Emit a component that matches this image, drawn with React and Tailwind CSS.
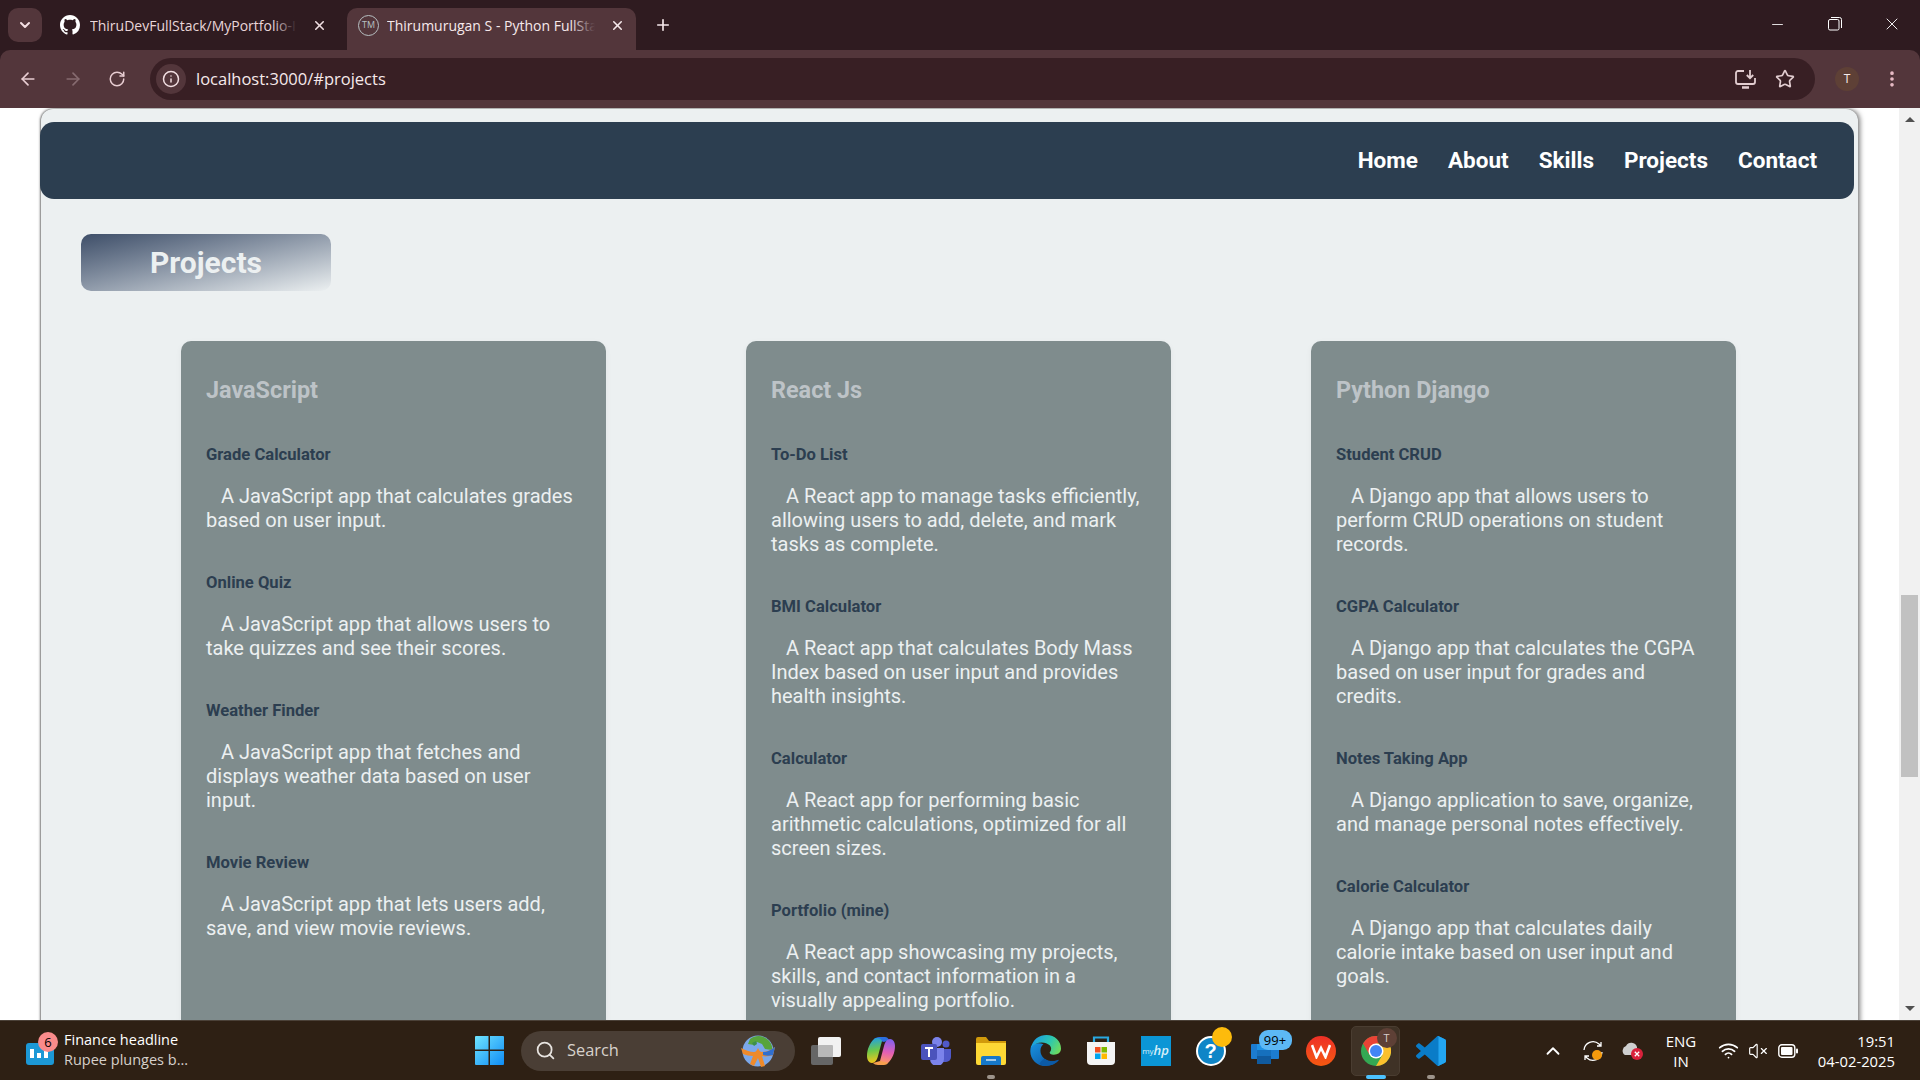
import React from "react";
import {
  ArrowLeft,
  ArrowRight,
  RotateCw,
  Info,
  Star,
  ChevronDown,
  ChevronUp,
  X,
  Plus,
  Minus,
  EllipsisVertical,
  Search,
  Wifi,
  VolumeX,
} from "lucide-react";

const columns = [
  {
    title: "JavaScript",
    projects: [
      { name: "Grade Calculator", text: "A JavaScript app that calculates grades based on user input." },
      { name: "Online Quiz", text: "A JavaScript app that allows users to take quizzes and see their scores." },
      { name: "Weather Finder", text: "A JavaScript app that fetches and displays weather data based on user input." },
      { name: "Movie Review", text: "A JavaScript app that lets users add, save, and view movie reviews." },
    ],
  },
  {
    title: "React Js",
    projects: [
      { name: "To-Do List", text: "A React app to manage tasks efficiently, allowing users to add, delete, and mark tasks as complete." },
      { name: "BMI Calculator", text: "A React app that calculates Body Mass Index based on user input and provides health insights." },
      { name: "Calculator", text: "A React app for performing basic arithmetic calculations, optimized for all screen sizes." },
      { name: "Portfolio (mine)", text: "A React app showcasing my projects, skills, and contact information in a visually appealing portfolio." },
    ],
  },
  {
    title: "Python Django",
    projects: [
      { name: "Student CRUD", text: "A Django app that allows users to perform CRUD operations on student records." },
      { name: "CGPA Calculator", text: "A Django app that calculates the CGPA based on user input for grades and credits." },
      { name: "Notes Taking App", text: "A Django application to save, organize, and manage personal notes effectively." },
      { name: "Calorie Calculator", text: "A Django app that calculates daily calorie intake based on user input and goals." },
    ],
  },
];

const navLinks = ["Home", "About", "Skills", "Projects", "Contact"];

const GithubMark = () => (
  <svg width="20" height="20" viewBox="0 0 16 16" fill="#ffffff">
    <path d="M8 0C3.58 0 0 3.58 0 8c0 3.54 2.29 6.53 5.47 7.59.4.07.55-.17.55-.38 0-.19-.01-.82-.01-1.49-2.01.37-2.53-.49-2.69-.94-.09-.23-.48-.94-.82-1.13-.28-.15-.68-.52-.01-.53.63-.01 1.08.58 1.23.82.72 1.21 1.87.87 2.33.66.07-.52.28-.87.51-1.07-1.78-.2-3.64-.89-3.64-3.95 0-.87.31-1.59.82-2.15-.08-.2-.36-1.02.08-2.12 0 0 .67-.21 2.2.82.64-.18 1.32-.27 2-.27s1.36.09 2 .27c1.53-1.04 2.2-.82 2.2-.82.44 1.1.16 1.92.08 2.12.51.56.82 1.27.82 2.15 0 3.07-1.87 3.75-3.65 3.95.29.25.54.73.54 1.48 0 1.07-.01 1.93-.01 2.2 0 .21.15.46.55.38A8 8 0 0 0 16 8c0-4.42-3.58-8-8-8z" />
  </svg>
);

const TabStrip = () => (
  <div className="h-[50px] shrink-0 bg-[#2f1b20] flex items-end text-[14px] font-['Open_Sans',sans-serif]">
    <div className="w-[34px] h-[34px] ml-2 mb-2 rounded-[10px] bg-[#53363b] flex items-center justify-center">
      <ChevronDown size={16} strokeWidth={3} color="#f4dfe2" />
    </div>
    <div className="w-[305px] h-[42px] flex items-center pl-[18px] pb-[8px] text-[#e9d6d9]">
      <GithubMark />
      <div className="relative ml-[10px] w-[207px] overflow-hidden whitespace-nowrap">
        ThiruDevFullStack/MyPortfolio-I
        <span className="absolute right-0 top-0 w-[24px] h-full bg-linear-to-r from-transparent to-[#2f1b20]" />
      </div>
      <X size={15} strokeWidth={2.5} color="#f0dfe2" className="ml-[15px]" />
    </div>
    <div className="w-[289px] h-[42px] rounded-t-[10px] bg-[#53363b] flex items-center pl-[11px] pb-[8px] text-[#f6e9eb]">
      <span className="w-[21px] h-[21px] rounded-full border border-[#b7c0c2] text-[9px] flex items-center justify-center text-[#b7c0c2]">TM</span>
      <div className="relative ml-[8px] w-[208px] overflow-hidden whitespace-nowrap">
        Thirumurugan S - Python FullSta
        <span className="absolute right-0 top-0 w-[24px] h-full bg-linear-to-r from-transparent to-[#53363b]" />
      </div>
      <X size={15} strokeWidth={2.5} color="#f6e9eb" className="ml-[15px]" />
    </div>
    <Plus size={18} strokeWidth={2.2} color="#f6e9eb" className="ml-[18px] mb-[16px]" />
    <div className="ml-auto h-[50px] flex items-center pb-[2px]">
      <div className="w-[57px] flex justify-center"><Minus size={17} strokeWidth={1.2} color="#ffffff" /></div>
      <div className="w-[57px] flex justify-center">
        <svg width="14" height="14" viewBox="0 0 14 14" fill="none" stroke="#ffffff" strokeWidth="1">
          <rect x="0.5" y="2.5" width="10.5" height="10.5" rx="1.5" />
          <path d="M3 .5h8.5a2 2 0 0 1 2 2V11" />
        </svg>
      </div>
      <div className="w-[57px] flex justify-center"><X size={20} strokeWidth={1.1} color="#ffffff" /></div>
    </div>
  </div>
);

const Toolbar = () => (
  <div className="h-[58px] shrink-0 bg-[#2f1b20]">
    <div className="h-[58px] bg-[#53363b] rounded-t-[10px] flex items-center">
      <div className="w-[150px] flex items-center pl-[18px] gap-[25px]">
        <ArrowLeft size={20} strokeWidth={2} color="#e8cdd2" />
        <ArrowRight size={20} strokeWidth={2} color="#866b70" />
        <RotateCw size={18} strokeWidth={2} color="#e8cdd2" />
      </div>
      <div className="w-[1665px] h-[42px] rounded-full bg-[#381f24] flex items-center pl-[6px]">
        <div className="w-[30px] h-[30px] rounded-full bg-[#53363b] flex items-center justify-center">
          <Info size={18} strokeWidth={2} color="#f2dfe2" />
        </div>
        <span className="ml-[10px] text-[16.5px] text-[#f6e9eb] font-['Open_Sans',sans-serif]">localhost:3000/#projects</span>
        <div className="ml-auto pr-[20px] flex items-center gap-[19px]">
          <svg width="21" height="20" viewBox="0 0 21 20" fill="none" stroke="#e2cdd0" strokeWidth="1.8">
            <path d="M9 2H3a2 2 0 0 0-2 2v9a2 2 0 0 0 2 2h15a2 2 0 0 0 2-2V9" />
            <path d="M7 18.5h7" strokeWidth="2.5" />
            <path d="M15 1v8M11.8 6l3.200 3.200L18.200 6" />
          </svg>
          <Star size={20} strokeWidth={2} color="#e2cdd0" />
        </div>
      </div>
      <div className="w-[24px] h-[24px] ml-[20px] rounded-full bg-[#5e4036] text-[#f5eaea] text-[12px] flex items-center justify-center font-['Open_Sans',sans-serif]">T</div>
      <EllipsisVertical size={20} strokeWidth={2.4} color="#e9bcc6" className="ml-[23px]" />
    </div>
  </div>
);

const ProjectColumn = ({ column }) => (
  <div className="w-[425px] shrink-0 rounded-[10px] bg-[#7f8c8d] px-[25px] pt-[35px] pb-[40px] shadow-[0_2px_6px_rgba(0,0,0,0.05)]">
    <h3 className="text-[23.4px] leading-[28px] font-bold text-[#bdc3c7]">{column.title}</h3>
    {column.projects.map((project) => (
      <div key={project.name} className="mt-[41px]">
        <h4 className="text-[16.6px] leading-[19px] font-bold text-[#2c3e50]">{project.name}</h4>
        <p className="mt-[20px] text-[20px] leading-[24px] indent-[15px] text-[#ecf0f1]">{project.text}</p>
      </div>
    ))}
  </div>
);

const Portfolio = () => (
  <div className="flex-1 min-h-0 flex bg-white overflow-hidden">
    <div className="w-[1899px] pl-[41px] overflow-hidden">
      <div className="w-[1817px] min-h-[1200px] bg-[#ecf0f1] rounded-t-[12px] mt-px pt-[13px] shadow-[2px_0_5px_rgba(0,0,0,0.5),-1px_0_2px_rgba(0,0,0,0.45)] font-['Roboto',sans-serif]">
        <nav className="h-[77px] -ml-px w-[1814px] rounded-[14px] bg-[#2c3e50] flex items-center justify-end gap-[30px] pr-[37px]">
          {navLinks.map((link) => (
            <a key={link} className="text-[22.5px] font-bold text-white">{link}</a>
          ))}
        </nav>
        <div className="ml-[40px] mt-[35px] w-[250px] h-[57px] rounded-[10px] bg-linear-to-br from-[#3f4f69] to-[#ecf0f1] flex items-center justify-center">
          <h2 className="text-[30px] font-bold text-[#ecf0f1]">Projects</h2>
        </div>
        <div className="mt-[50px] pl-[140px] flex gap-[140px]">
          {columns.map((column) => (
            <ProjectColumn key={column.title} column={column} />
          ))}
        </div>
      </div>
    </div>
    <div className="w-[21px] shrink-0 bg-[#f1f1f1] flex flex-col items-center">
      <div className="mt-[9px] w-0 h-0 border-x-[5px] border-x-transparent border-b-[5px] border-b-[#505050]" />
      <div className="mt-[473px] w-[17px] h-[182px] bg-[#c1c1c1]" />
      <div className="mt-auto mb-[9px] w-0 h-0 border-x-[5px] border-x-transparent border-t-[5px] border-t-[#505050]" />
    </div>
  </div>
);

const Slot = ({ children, active, dot }) => (
  <div className="w-[55px] h-[60px] flex items-center justify-center relative">
    {active && <div className="absolute w-[49px] h-[50px] rounded-[5px] bg-[#3f3226] border border-[#4a3d31]" />}
    <div className="relative flex">{children}</div>
    {dot && (
      <div className={active ? "absolute bottom-[2px] w-[20px] h-[4px] rounded-full bg-[#4cc2ff]" : "absolute bottom-[2px] w-[8px] h-[4px] rounded-full bg-[#9d948b]"} />
    )}
  </div>
);

const WindowsLogo = () => (
  <svg width="29" height="29" viewBox="0 0 29 29">
    <defs>
      <linearGradient id="winlogo" x1="0" y1="0" x2="1" y2="1">
        <stop offset="0" stopColor="#6fe4ff" />
        <stop offset="1" stopColor="#0f8cf5" />
      </linearGradient>
    </defs>
    <path fill="url(#winlogo)" d="M1 0h12.500v13.500H0V1a1 1 0 0 1 1-1zM15 0h13a1 1 0 0 1 1 1v12.500H15zM0 15h13.500v14H1a1 1 0 0 1-1-1zM15 15h14v13a1 1 0 0 1-1 1H15z" />
  </svg>
);

const GlobeBadge = () => (
  <svg width="34" height="34" viewBox="0 0 34 34">
    <circle cx="17" cy="17" r="15.500" fill="#7ba8ea" />
    <path fill="#57a43c" d="M9 5c5-4 12-4 17 0 4 3 6 8 5 11l-7-1-3-5-5-2-3 3-6-1z" />
    <path fill="#3d8f4a" d="M11 9l4-2 1 3-3 2z" />
    <path fill="#ee8a2b" d="M0 14c4 2 9 4 13 4 2 0 3-2 4-4 1 2 2 4 4 4 4 0 9-2 13-5l-2 8c-3 1-7 2-11 1l3 10-4 1-3-9-4 8-4-2 3-8c-4 0-7-1-10-2z" />
    <path fill="#2f6fd0" d="M22 18c4 0 8-2 12-5l-2 8c-3 1-7 1-10 0z" />
  </svg>
);

const TaskView = () => (
  <svg width="30" height="28" viewBox="0 0 30 28">
    <rect x="0" y="8" width="22" height="20" rx="2" fill="#666666" />
    <rect x="7" y="0" width="23" height="20" rx="2" fill="#f2f2f2" />
    <rect x="7" y="8" width="15" height="12" rx="1" fill="#b8b8b8" />
  </svg>
);

const Copilot = () => (
  <svg width="28" height="28" viewBox="0 0 28 28">
    <defs>
      <linearGradient id="copA" x1="0.3" y1="0" x2="0.4" y2="1">
        <stop offset="0" stopColor="#1f9fe8" />
        <stop offset="0.5" stopColor="#6cc84a" />
        <stop offset="1" stopColor="#f7c71a" />
      </linearGradient>
      <linearGradient id="copB" x1="0.6" y1="0" x2="0.5" y2="1">
        <stop offset="0" stopColor="#7e60f0" />
        <stop offset="0.55" stopColor="#e45fb4" />
        <stop offset="1" stopColor="#ff9a60" />
      </linearGradient>
    </defs>
    <path fill="#2b6fe0" d="M7 2C8 1 10 0 12 0h6c2 0 3 1 4 3l-5 2z" />
    <path fill="url(#copA)" d="M7 2c3-2 7-1 8 2l-4 15c-1 4-3 7-6 7-3 0-5-3-5-7 0-7 3-13 7-17z" />
    <path fill="url(#copB)" d="M21 26c-3 2-7 1-8-2l4-15c1-4 3-7 6-7 3 0 5 3 5 7 0 7-3 13-7 17z" />
    <path fill="#f7a04e" d="M6 26c1 1 3 2 5 2h6c2 0 3-1 4-2l-8-2z" />
  </svg>
);

const Teams = () => (
  <svg width="30" height="28" viewBox="0 0 30 28">
    <circle cx="16" cy="5" r="5" fill="#7b83eb" />
    <circle cx="25" cy="7" r="3.500" fill="#5059c9" />
    <path fill="#5059c9" d="M20 12h10v8a5 5 0 0 1-5 5h-5z" />
    <path fill="#7b83eb" d="M9 11h14v11a6 6 0 0 1-14 0z" />
    <rect x="0" y="7" width="16" height="16" rx="2" fill="#4b53bc" />
    <path fill="#ffffff" d="M4 10h8v2H9v8H7v-8H4z" />
  </svg>
);

const Explorer = () => (
  <svg width="30" height="28" viewBox="0 0 30 28">
    <path fill="#d19a0b" d="M0 2a2 2 0 0 1 2-2h8l3 4h17v6H0z" />
    <path fill="#fdd835" d="M0 6h30v20a2 2 0 0 1-2 2H2a2 2 0 0 1-2-2z" />
    <path fill="#1678c9" d="M5 21a2 2 0 0 1 2-2h16a2 2 0 0 1 2 2v7H5z" />
    <rect x="10" y="22" width="10" height="2" fill="#ffffff" opacity="0.6" />
  </svg>
);

const Edge = () => (
  <svg width="31" height="31" viewBox="0 0 30 30">
    <defs>
      <linearGradient id="edgeA" x1="0" y1="0.3" x2="1" y2="0.7">
        <stop offset="0" stopColor="#1a9be6" />
        <stop offset="0.55" stopColor="#2cc6b0" />
        <stop offset="1" stopColor="#6fdc5c" />
      </linearGradient>
      <linearGradient id="edgeB" x1="0" y1="0" x2="1" y2="1">
        <stop offset="0" stopColor="#1893e0" />
        <stop offset="1" stopColor="#0b4f9e" />
      </linearGradient>
    </defs>
    <path fill="url(#edgeB)" d="M1 11C-2 21 5 30 15 30c5 0 10-2 13-6-4 2-10 2-14-1-5-4-5-11-1-14-4-2-10-1-12 2z" />
    <path fill="url(#edgeA)" d="M1 12C3 4 9 0 16 0c8 0 14 6 14 13 0 4-3 6-7 6-3 0-4-1-4-2 2-2 2-5 0-7C15 6 6 6 1 12z" />
    <path fill="#0c5aa6" d="M14 23c4 3 10 3 14 1-3 4-8 6-13 6-2 0-4-1-6-2 1-2 3-4 5-5z" />
  </svg>
);

const Store = () => (
  <svg width="30" height="29" viewBox="0 0 30 29">
    <path d="M8 7V1.500h14V7" fill="none" stroke="#29a8e0" strokeWidth="2.200" />
    <path fill="#f4f4f4" d="M1 6h28v19a4 4 0 0 1-4 4H5a4 4 0 0 1-4-4z" />
    <rect x="9" y="11" width="5.500" height="5.500" fill="#f25022" />
    <rect x="15.500" y="11" width="5.500" height="5.500" fill="#7fba00" />
    <rect x="9" y="17.500" width="5.500" height="5.500" fill="#00a4ef" />
    <rect x="15.500" y="17.500" width="5.500" height="5.500" fill="#ffb900" />
  </svg>
);

const MyHp = () => (
  <div className="w-[30px] h-[30px] bg-[#0b96d6] flex items-center justify-center text-[#d7eef8] font-['Open_Sans',sans-serif]">
    <span className="text-[8px]">my</span>
    <span className="text-[13px] italic font-semibold leading-none">hp</span>
  </div>
);

const HelpBadge = () => (
  <div className="w-[30px] h-[30px] rounded-full border-[2px] border-white bg-[#0f85c7] flex items-center justify-center text-white font-bold text-[20px] relative font-['Liberation_Sans',sans-serif]">
    ?
    <span className="absolute -top-[11px] left-[14px] w-[20px] h-[20px] rounded-full bg-[#fdbb0c]" />
  </div>
);

const Outlook = () => (
  <div className="relative w-[30px] h-[30px]">
    <svg width="30" height="30" viewBox="0 0 30 30">
      <rect x="0" y="8" width="28" height="15" rx="1" fill="#1c7cd0" />
      <rect x="6" y="8" width="14" height="6" fill="#1f93e6" />
      <rect x="6" y="14" width="14" height="6" fill="#1670bd" />
      <rect x="6" y="20" width="14" height="8" fill="#105a9e" />
    </svg>
    <span className="absolute -top-[6px] left-[8px] w-[33px] h-[20px] rounded-[9px] bg-[#5cb8f5] text-[13px] leading-[20px] text-center text-black font-['Open_Sans',sans-serif]">99+</span>
  </div>
);

const Wps = () => (
  <div className="w-[30px] h-[30px] rounded-full bg-linear-to-b from-[#ee2f26] to-[#f5580f] flex items-center justify-center">
    <svg width="20" height="16" viewBox="0 0 20 16" fill="none" stroke="#ffffff" strokeWidth="2.600">
      <path d="M1 2l4.500 12L10 5l4.500 9L19 2" />
    </svg>
  </div>
);

const Chrome = () => (
  <div className="relative w-[30px] h-[30px]">
    <svg width="30" height="30" viewBox="0 0 30 30">
      <circle cx="15" cy="15" r="15" fill="#34a853" />
      <path fill="#ea4335" d="M2 7.500A15 15 0 0 1 28 7.500H15L8.500 18.750z" />
      <path fill="#fbc02d" d="M28 7.500A15 15 0 0 1 15 30L21.500 18.750 15 7.500z" />
      <circle cx="15" cy="15" r="7.500" fill="#ffffff" />
      <circle cx="15" cy="15" r="6" fill="#4285f4" />
    </svg>
    <span className="absolute -top-[8px] left-[16px] w-[20px] h-[20px] rounded-full bg-[#5e4036] text-[11px] leading-[20px] text-center text-[#d8cdca] font-['Open_Sans',sans-serif]">T</span>
  </div>
);

const VsCode = () => (
  <svg width="30" height="30" viewBox="0 0 100 100">
    <path fill="#0a7cc8" d="M70.900 99.300c1.600.6 3.400.6 5-.2l20.600-9.900c2.200-1 3.500-3.200 3.500-5.600V16.400c0-2.400-1.400-4.600-3.500-5.600L75.900.9c-2.100-1-4.500-.8-6.300.6-.3.2-.5.4-.7.7L29.400 38.200 12.200 25.100c-1.600-1.200-3.800-1.100-5.300.2L1.400 30.400c-1.800 1.700-1.800 4.500 0 6.100L16.300 50 1.400 63.500c-1.800 1.700-1.800 4.500 0 6.100l5.500 5c1.500 1.300 3.700 1.400 5.300.2l17.200-13.100L68.900 97.800c.6.6 1.300 1.100 2 1.500zM75 27.300 45 50l30 22.700V27.300z" />
    <path fill="#23a6f2" d="M71 .5c1.600-.4 3.400-.3 4.900.4l20.600 9.900c2.100 1 3.500 3.200 3.500 5.600v67.200c0 2.400-1.300 4.600-3.500 5.600l-20.600 9.900c-1.600.8-3.400.8-5 .2 2.300.8 4-1 4-3.500V4c0-2.500-2-4.200-3.900-3.500z" />
  </svg>
);

const Taskbar = () => (
  <div className="h-[60px] shrink-0 border-t border-[#4b4138] bg-[#2e2014] flex items-center text-white font-['Open_Sans',sans-serif]">
    <div className="w-[472px] flex items-center pl-[26px]">
      <div className="relative w-[28px] h-[22px] rounded-[3px] bg-[#1c98d6] mt-[6px]">
        <span className="absolute left-[4px] bottom-[7px] w-[4px] h-[9px] bg-white" />
        <span className="absolute left-[11px] bottom-[7px] w-[4px] h-[5px] bg-white" />
        <span className="absolute left-[18px] bottom-[7px] w-[4px] h-[7px] bg-white" />
        <span className="absolute -top-[11px] left-[12px] w-[20px] h-[20px] rounded-full bg-[#f98b8b] text-[13px] leading-[20px] text-center text-black">6</span>
      </div>
      <div className="ml-[10px] -mt-[2px] leading-[20px] text-[14.5px]">
        <div className="text-white">Finance headline</div>
        <div className="text-[#d6d0ca]">Rupee plunges b...</div>
      </div>
    </div>
    <div className="w-[34px] flex justify-center"><WindowsLogo /></div>
    <div className="ml-[15px] w-[274px] h-[40px] rounded-full bg-[#4a3e35] flex items-center pl-[14px]">
      <Search size={21} strokeWidth={2} color="#e8e4e0" />
      <span className="ml-[11px] text-[16.4px] text-[#d8d2cc]">Search</span>
      <div className="ml-auto mr-[20px] flex"><GlobeBadge /></div>
    </div>
    <div className="ml-[3px] flex items-center">
      <Slot><TaskView /></Slot>
      <Slot><Copilot /></Slot>
      <Slot><Teams /></Slot>
      <Slot dot><Explorer /></Slot>
      <Slot><Edge /></Slot>
      <Slot><Store /></Slot>
      <Slot><MyHp /></Slot>
      <Slot><HelpBadge /></Slot>
      <Slot><Outlook /></Slot>
      <Slot><Wps /></Slot>
      <Slot active dot><Chrome /></Slot>
      <Slot dot><VsCode /></Slot>
    </div>
    <div className="ml-auto pr-[25px] flex items-center">
      <div className="w-[40px] flex justify-center"><ChevronUp size={22} strokeWidth={2} color="#ffffff" /></div>
      <div className="w-[40px] flex justify-center">
        <svg width="22" height="22" viewBox="0 0 22 22" fill="none" stroke="#ffffff" strokeWidth="1.300">
          <path d="M2 10a9 9 0 0 1 15-6l2 2M19 2v4h-4M20 12a9 9 0 0 1-15 6l-2-2M3 20v-4h4" />
          <circle cx="15" cy="15" r="5" fill="#f59a0c" stroke="none" />
        </svg>
      </div>
      <div className="w-[40px] flex justify-center">
        <svg width="22" height="20" viewBox="0 0 22 20">
          <path fill="#cfcfcf" d="M3 14a5 5 0 0 1 1-9 6 6 0 0 1 11 1v8z" />
          <circle cx="15" cy="13" r="6" fill="#d9213b" />
          <path d="M12.800 10.800l4.400 4.400M17.200 10.800l-4.400 4.400" stroke="#ffffff" strokeWidth="1.300" />
        </svg>
      </div>
      <div className="w-[56px] text-center text-[15px] leading-[20px]">
        <div>ENG</div>
        <div>IN</div>
      </div>
      <div className="ml-[4px] w-[30px] flex justify-center"><Wifi size={21} strokeWidth={2} color="#ffffff" /></div>
      <div className="w-[30px] flex justify-center"><VolumeX size={20} strokeWidth={1.4} color="#ffffff" /></div>
      <div className="w-[30px] flex justify-center">
        <svg width="20" height="14" viewBox="0 0 20 14" fill="none">
          <rect x="0.800" y="0.800" width="16" height="12.400" rx="3" stroke="#ffffff" strokeWidth="1.400" />
          <rect x="3" y="3" width="11.500" height="8" rx="1" fill="#ffffff" />
          <rect x="18" y="4.500" width="2" height="5" rx="1" fill="#ffffff" />
        </svg>
      </div>
      <div className="ml-[11px] w-[81px] text-right text-[14.8px] leading-[20px] whitespace-nowrap">
        <div>19:51</div>
        <div>04-02-2025</div>
      </div>
    </div>
  </div>
);

const App = () => {
  return (
    <div className="h-screen w-screen flex flex-col overflow-hidden">
      <TabStrip />
      <Toolbar />
      <Portfolio />
      <Taskbar />
    </div>
  );
};

export default App;
